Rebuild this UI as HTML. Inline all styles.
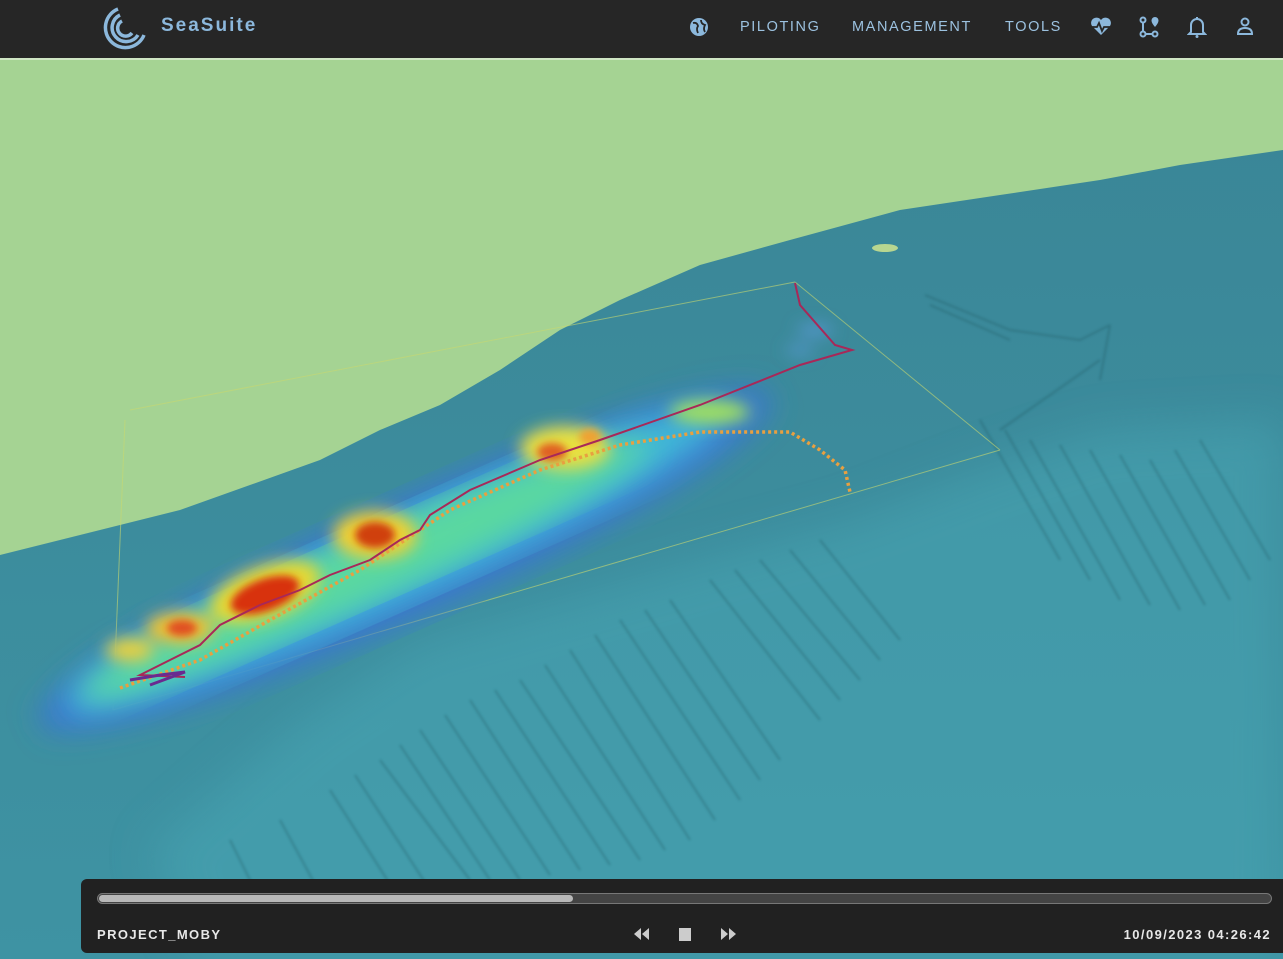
<!DOCTYPE html>
<html><head><meta charset="utf-8"><style>
html,body{margin:0;padding:0;width:1283px;height:959px;overflow:hidden;background:#3b8a99;font-family:"Liberation Sans",sans-serif}
.hdr{position:absolute;left:0;top:0;width:1283px;height:60px;background:#262626;border-bottom:2px solid #cfe6c4;box-sizing:border-box}
.brand{position:absolute;left:161px;top:15px;color:#8cb8dc;font-weight:bold;font-size:19px;letter-spacing:2px}
.nav{position:absolute;top:19px;color:#9cc2e0;font-size:14.5px;letter-spacing:1.6px}
.bar{position:absolute;left:81px;top:879px;width:1202px;height:74px;background:#212121;border-radius:6px 0 0 6px}
.track{position:absolute;left:16px;top:14px;width:1173px;height:9px;border:1px solid #777;border-radius:6px;background:#444}
.fill{position:absolute;left:1px;top:1px;width:474px;height:7px;border-radius:4px;background:#b8b8b8}
.lbl{position:absolute;top:48px;color:#e8e8e8;font-size:13px;letter-spacing:1.4px;font-weight:bold}
</style></head><body>
<svg style="position:absolute;left:0;top:59px" width="1283" height="900" viewBox="0 59 1283 900">
<defs>
<filter id="b8"><feGaussianBlur stdDeviation="8"/></filter>
<filter id="b14"><feGaussianBlur stdDeviation="14"/></filter>
<filter id="b20"><feGaussianBlur stdDeviation="22"/></filter>
<filter id="b4"><feGaussianBlur stdDeviation="4"/></filter>
<filter id="b1"><feGaussianBlur stdDeviation="1.2"/></filter>
<linearGradient id="oc" x1="0" y1="0" x2="0" y2="1">
<stop offset="0" stop-color="#3a8596"/><stop offset="1" stop-color="#3e93a3"/></linearGradient>
</defs>
<rect x="0" y="59" width="1283" height="900" fill="url(#oc)"/>
<g opacity="0.5" filter="url(#b20)">
<path d="M300 720 L420 640 L560 600 L700 560 L850 520 L980 470 L1100 430 L1283 420 L1283 959 L200 959 L150 850 Z" fill="#4aa7b5"/>
</g>
<g stroke="#1f5661" stroke-width="2" opacity="0.35" fill="none" filter="url(#b1)">
<path d="M380 760 L470 880"/><path d="M400 745 L490 880"/><path d="M420 730 L520 880"/><path d="M445 715 L550 875"/><path d="M470 700 L580 870"/><path d="M495 690 L610 865"/><path d="M520 680 L640 860"/><path d="M545 665 L665 850"/><path d="M570 650 L690 840"/><path d="M595 635 L715 820"/><path d="M620 620 L740 800"/><path d="M645 610 L760 780"/><path d="M670 600 L780 760"/><path d="M710 580 L820 720"/><path d="M735 570 L840 700"/><path d="M760 560 L860 680"/><path d="M790 550 L880 660"/><path d="M820 540 L900 640"/><path d="M330 790 L400 900"/><path d="M355 775 L430 890"/><path d="M280 820 L340 930"/><path d="M230 840 L280 940"/>
<path d="M980 420 L1060 560"/><path d="M1005 430 L1090 580"/><path d="M1030 440 L1120 600"/><path d="M1060 445 L1150 605"/><path d="M1090 450 L1180 610"/><path d="M1120 455 L1205 605"/><path d="M1150 460 L1230 600"/><path d="M1175 450 L1250 580"/><path d="M1200 440 L1270 560"/><path d="M925 295 L1010 330 L1080 340 L1110 325"/><path d="M930 305 L1010 340"/><path d="M1000 430 L1100 360"/><path d="M1110 325 L1100 380"/>
</g>
<!-- land -->
<path d="M0 59 L1283 59 L1283 150 L1180 165 L1100 180 L1000 195 L900 210 L790 240 L700 265 L620 300 L560 330 L500 370 L440 405 L380 430 L320 460 L250 485 L180 510 L120 525 L60 540 L0 555 Z" fill="#a5d393"/>
<ellipse cx="885" cy="248" rx="13" ry="4" fill="#b8d690"/>
<g stroke="#c8d870" stroke-width="1" fill="none" opacity="0.6">
<path d="M113 710 L125 420"/><path d="M113 710 L1000 450"/><path d="M795 282 L1000 450"/><path d="M130 410 L795 282"/>
</g>
<!-- heatmap -->
<g transform="translate(405 560) rotate(-24)">
<ellipse cx="0" cy="0" rx="400" ry="58" fill="#3a78d0" filter="url(#b14)"/>
<ellipse cx="-10" cy="-4" rx="360" ry="42" fill="#3fb8d8" filter="url(#b14)"/>
<ellipse cx="-40" cy="-8" rx="310" ry="32" fill="#5ad8a0" filter="url(#b14)"/>
</g>
<g filter="url(#b8)">
<ellipse cx="265" cy="592" rx="58" ry="26" fill="#e8d830" transform="rotate(-20 265 592)"/>
<ellipse cx="375" cy="535" rx="42" ry="24" fill="#f0d030"/>
<ellipse cx="180" cy="628" rx="34" ry="16" fill="#f0c030"/>
<ellipse cx="565" cy="448" rx="45" ry="22" fill="#e8e040"/>
<ellipse cx="130" cy="650" rx="24" ry="12" fill="#e8d040"/>
<ellipse cx="710" cy="412" rx="40" ry="12" fill="#a0e060"/>
<ellipse cx="815" cy="330" rx="18" ry="5" fill="#5a9ad8"/>
<ellipse cx="800" cy="350" rx="14" ry="4" fill="#5a9ad8"/>
</g>
<g filter="url(#b4)">
<ellipse cx="265" cy="595" rx="36" ry="16" fill="#d83010" transform="rotate(-20 265 595)"/>
<ellipse cx="375" cy="535" rx="20" ry="13" fill="#d04010"/>
<ellipse cx="182" cy="628" rx="15" ry="8" fill="#e05020"/>
<ellipse cx="552" cy="452" rx="15" ry="9" fill="#e06020"/>
<ellipse cx="590" cy="437" rx="11" ry="8" fill="#f0a030"/>
</g>
<path d="M120 688 L200 660 L270 620 L360 570 L450 510 L540 470 L620 445 L700 432 L790 432 L820 450 L845 470 L850 492" stroke="#e8a040" stroke-width="3.5" fill="none" stroke-dasharray="3 3"/>
<path d="M795 283 L800 305 L835 345 L852 350 L800 365 L700 405 L600 440 L540 460 L470 490 L430 515 L420 530 L400 540 L370 560 L330 575 L300 590 L260 605 L220 625 L200 645 L170 660 L140 675 L185 677" stroke="#a82858" stroke-width="2" fill="none"/>
<path d="M130 680 L160 675 L185 672 L150 685" stroke="#6a2a90" stroke-width="3" fill="none"/>
</svg>
<div class="hdr">
<svg style="position:absolute;left:100px;top:5px" width="48" height="46" viewBox="0 0 48 46">
<g fill="none" stroke="#8cb8dc" stroke-width="3.5">
<path d="M18 4 A20 20 0 1 0 44 30"/><path d="M20 10 A14 14 0 1 0 38 30"/><path d="M22 16 A8 8 0 1 0 32 28"/>
</g></svg>
<div class="brand">SeaSuite</div>
<svg style="position:absolute;left:689px;top:17px" width="20" height="20" viewBox="0 0 20 20"><circle cx="10" cy="10" r="9" fill="#8cb8dc"/><path d="M4 6 Q8 5 9 9 Q7 12 9 16 M12 3 Q12 7 16 8 Q14 12 16 15" stroke="#262626" stroke-width="1.8" fill="none"/></svg>
<div class="nav" style="left:740px">PILOTING</div>
<div class="nav" style="left:852px">MANAGEMENT</div>
<div class="nav" style="left:1005px">TOOLS</div>
<svg style="position:absolute;left:1090px;top:17px" width="22" height="20" viewBox="0 0 22 20"><path d="M11 18 L2 9 A5 5 0 0 1 11 3 A5 5 0 0 1 20 9 Z" fill="#8cb8dc"/><path d="M1 10 L7 10 L9 6 L12 14 L14 10 L21 10" stroke="#262626" stroke-width="1.8" fill="none"/></svg>
<svg style="position:absolute;left:1139px;top:16px" width="20" height="22" viewBox="0 0 20 22"><g fill="none" stroke="#8cb8dc" stroke-width="2"><circle cx="4" cy="4" r="2.5"/><circle cx="4" cy="18" r="2.5"/><circle cx="16" cy="18" r="2.5"/><path d="M4 7 V15 M7 18 H13"/></g><path d="M16 1 A3.5 3.5 0 0 1 19.5 4.5 Q19.5 7 16 11 Q12.5 7 12.5 4.5 A3.5 3.5 0 0 1 16 1Z" fill="#8cb8dc"/></svg>
<svg style="position:absolute;left:1187px;top:16px" width="20" height="22" viewBox="0 0 20 22"><path d="M4 16 V9 A6 6 0 0 1 16 9 V16 L18 18 H2 Z" fill="none" stroke="#8cb8dc" stroke-width="2"/><circle cx="10" cy="20.5" r="1.5" fill="#8cb8dc"/><rect x="9" y="1" width="2" height="3" fill="#8cb8dc"/></svg>
<svg style="position:absolute;left:1236px;top:17px" width="18" height="20" viewBox="0 0 18 20"><g fill="none" stroke="#8cb8dc" stroke-width="2"><circle cx="9" cy="5" r="3.5"/><path d="M2 17 Q2 11 9 11 Q16 11 16 17 Z"/></g></svg>
</div>
<div class="bar">
<div class="track"><div class="fill"></div></div>
<div class="lbl" style="left:16px">PROJECT_MOBY</div>
<svg style="position:absolute;left:550px;top:48px" width="20" height="14" viewBox="0 0 20 14"><path d="M10 1 L3 7 L10 13Z M18 1 L11 7 L18 13Z" fill="#ccc"/></svg>
<div style="position:absolute;left:598px;top:49px;width:12px;height:13px;background:#ccc"></div>
<svg style="position:absolute;left:638px;top:48px" width="20" height="14" viewBox="0 0 20 14"><path d="M2 1 L9 7 L2 13Z M10 1 L17 7 L10 13Z" fill="#ccc"/></svg>
<div class="lbl" style="right:12px">10/09/2023 04:26:42</div>
</div>
</body></html>
